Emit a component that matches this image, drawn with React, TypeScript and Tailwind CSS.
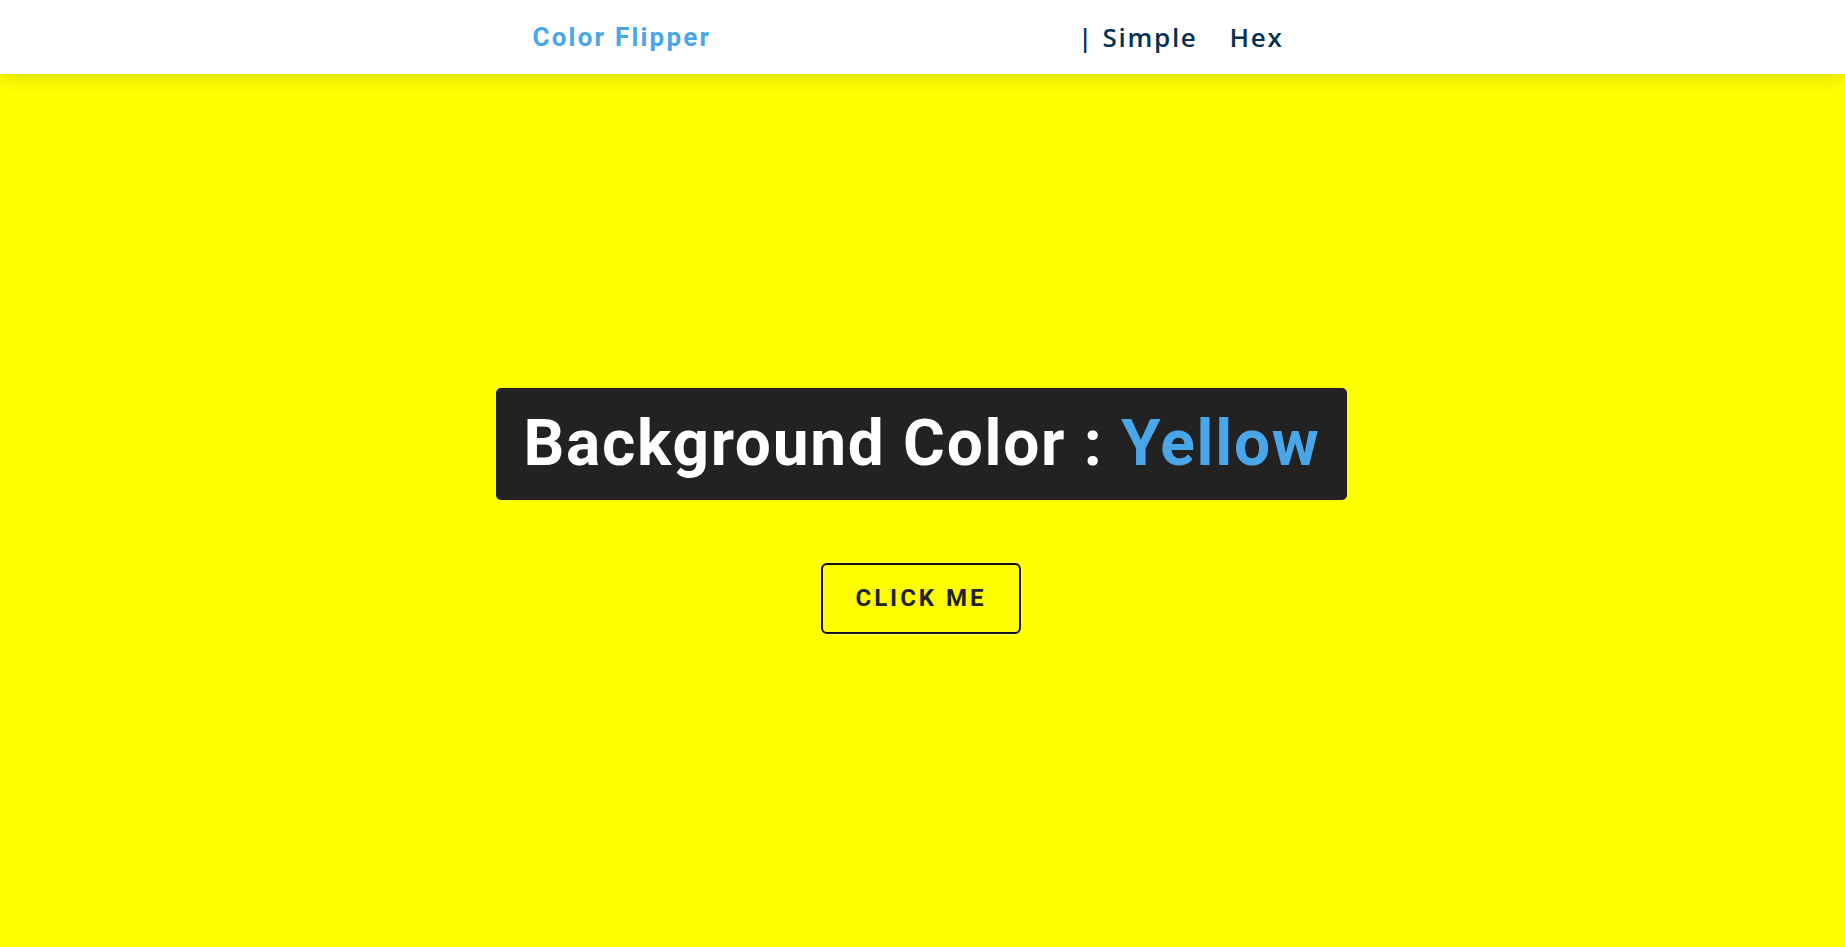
import { useState } from 'react';

const colors = ['Yellow', 'Red', 'Green', 'Blue'];

export default function App() {
    const [color, setColor] = useState('Yellow');

    const handleClick = () => {
        const next = colors[(colors.indexOf(color) + 1) % colors.length];
        setColor(next);
    };

    return (
        <div className="min-h-screen w-full flex flex-col bg-[#ffff00]" style={{ background: color.toLowerCase() }}>
            <nav className="h-[74px] w-full bg-white shadow-[0_5px_15px_rgba(0,0,0,0.12)] relative z-10 flex items-center">
                <div className="w-[780px] mx-auto flex items-center justify-between">
                    <h4 className="font-['Roboto'] font-bold text-[26px] tracking-[2.2px] text-[#49a6e9]">Color Flipper</h4>
                    <ul className="flex items-center gap-[32px] pr-[29px] font-['Open_Sans'] font-semibold text-[26px] tracking-[1.7px] text-[#063251]">
                        <li>| Simple</li>
                        <li>Hex</li>
                    </ul>
                </div>
            </nav>

            <main className="flex-1 flex flex-col items-center justify-center">
                <h2 className="bg-[#222] text-white rounded-[5px] pl-[28px] pr-[27px] h-[112px] flex items-center font-['Roboto'] font-bold text-[64px] tracking-[1.7px] mb-[63px] mr-[2px]">
                    Background Color :&nbsp;<span className="text-[#49a6e9]">{color}</span>
                </h2>
                <button
                    onClick={handleClick}
                    className="w-[200px] h-[71px] mr-[3px] border-2 border-[#111] rounded-[6px] shadow-[0_0_2px_#fff] font-['Roboto'] font-bold text-[24px] tracking-[3px] uppercase text-[#222] bg-transparent"
                >
                    Click me
                </button>
            </main>
        </div>
    );
}
